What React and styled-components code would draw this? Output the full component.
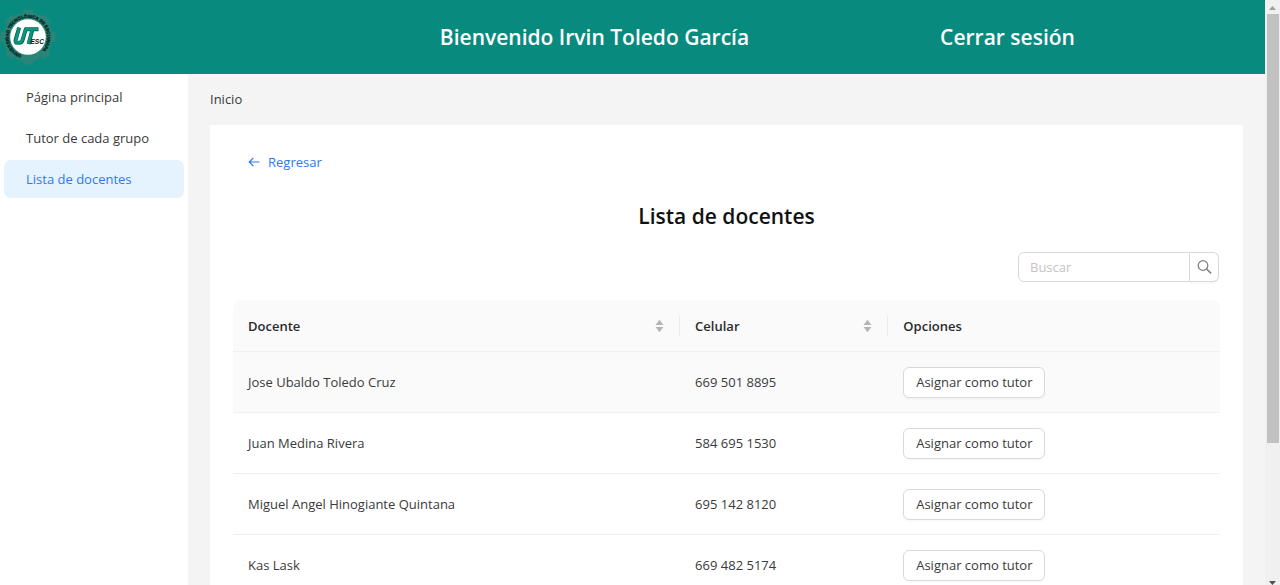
import React from "react";
import styled, { createGlobalStyle } from "styled-components";

const font = '"Segoe UI", "Open Sans", "Noto Sans", sans-serif';

const GlobalStyle = createGlobalStyle`
  *, *::before, *::after { box-sizing: border-box; }
  body {
    margin: 0;
    background: #f4f4f4;
    color: #3a3a3a;
    font: 400 13px/20px ${font};
  }
  button, input { font: inherit; color: inherit; }
`;

const Shell = styled.div`
  display: flex;
  height: 100vh;
  overflow: hidden;
`;

const Page = styled.div`
  flex: 1;
  min-width: 0;
  display: flex;
  flex-direction: column;
  overflow-y: auto;
  scrollbar-width: none;
`;

const ScrollTrack = styled.div`
  flex: none;
  width: 15px;
  display: flex;
  flex-direction: column;
  align-items: center;
  background: #f0f0f0;
  overflow: hidden;
`;

const ScrollArrow = styled.svg`
  flex: none;
  width: 15px;
  height: 14px;
  display: block;
  fill: ${(p) => (p.$dim ? "#a0a0a0" : "#505050")};
`;

const ScrollThumb = styled.div`
  width: 12px;
  flex: 429;
  background: #c1c1c1;
`;

const ScrollRest = styled.div`
  flex: 128;
`;

const Header = styled.header`
  flex: none;
  height: 74px;
  display: grid;
  grid-template-columns: 388fr 413fr 413fr 51fr;
  align-items: center;
  background: #088b7e;
  color: #fff;
  font-size: 21px;
  font-weight: 600;
  line-height: 30px;
  text-align: center;
  white-space: nowrap;
`;

const Logo = styled.svg`
  width: 56px;
  height: 56px;
  display: block;
`;

const Welcome = styled.div``;

const LogoutLink = styled.a`
  color: inherit;
  text-decoration: none;
`;

const Body = styled.div`
  flex: 1 0 auto;
  display: flex;
`;

const Sidebar = styled.nav`
  flex: none;
  width: 188px;
  padding: 4px;
  display: flex;
  flex-direction: column;
  gap: 3px;
  background: #fff;
`;

const NavItem = styled.a`
  height: 38px;
  padding: 0 22px;
  display: flex;
  align-items: center;
  border-radius: 7px;
  text-decoration: none;
  white-space: nowrap;
  color: ${(p) => (p.$active ? "#2f78f0" : "#3a3a3a")};
  background: ${(p) => (p.$active ? "#e5f3ff" : "transparent")};
`;

const Main = styled.main`
  flex: 1;
  min-width: 0;
  padding: 0 22px 22px;
`;

const Breadcrumb = styled.div`
  padding: 15px 0 16px;
`;

const Card = styled.section`
  padding: 22px 23px;
  background: #fff;
`;

const BackButton = styled.button`
  display: flex;
  align-items: center;
  gap: 8px;
  height: 30px;
  padding: 0 15px;
  border: 0;
  background: none;
  color: #2f78f0;
`;

const BackIcon = styled.svg`
  width: 12px;
  height: 12px;
  display: block;
`;

const Title = styled.h1`
  margin: 24px 0 21px;
  font-size: 21px;
  font-weight: 600;
  line-height: 30px;
  text-align: center;
  color: #111;
`;

const SearchForm = styled.form`
  display: flex;
  width: 201px;
  height: 30px;
  margin: 0 1px 18px auto;
`;

const SearchInput = styled.input`
  flex: 1;
  min-width: 0;
  padding: 0 11px;
  border: 1px solid #d9d9d9;
  border-radius: 6px 0 0 6px;
  outline: 0;
  background: #fff;
  &::placeholder { color: #c4c4c4; opacity: 1; }
`;

const SearchButton = styled.button`
  width: 29px;
  padding: 0;
  display: grid;
  place-items: center;
  border: 1px solid #d9d9d9;
  border-left: 0;
  border-radius: 0 6px 6px 0;
  background: #fff;
  box-shadow: 0 2px 0 rgba(0, 0, 0, 0.02);
  color: #808080;
`;

const SearchIcon = styled.svg`
  width: 15px;
  height: 15px;
  display: block;
`;

const Table = styled.table`
  width: 100%;
  table-layout: fixed;
  border-collapse: separate;
  border-spacing: 0;
  text-align: left;
`;

const HeadCell = styled.th`
  width: ${(p) => p.$width};
  height: 52px;
  padding: 0;
  background: #fafafa;
  border-bottom: 1px solid #f0f0f0;
  font-weight: 600;
  color: #2b2b2b;
  &:first-child { border-top-left-radius: 7px; }
  &:last-child { border-top-right-radius: 7px; }
`;

const HeadContent = styled.div`
  height: 20px;
  padding: 0 15px;
  display: flex;
  align-items: center;
  justify-content: space-between;
  border-right: ${(p) => (p.$divided ? "1px solid #ececec" : "0")};
`;

const SortIcon = styled.svg`
  width: 9px;
  height: 14px;
  display: block;
  fill: #b5b5b5;
`;

const Row = styled.tr`
  background: ${(p) => (p.$highlighted ? "#fafafa" : "#fff")};
`;

const Cell = styled.td`
  height: 61px;
  padding: 0 15px;
  border-bottom: 1px solid #f0f0f0;
`;

const AssignButton = styled.button`
  display: block;
  width: 142px;
  height: 31px;
  padding: 0;
  border: 1px solid #d9d9d9;
  border-radius: 6px;
  background: #fff;
  box-shadow: 0 2px 0 rgba(0, 0, 0, 0.02);
  white-space: nowrap;
`;

const menu = ["Página principal", "Tutor de cada grupo", "Lista de docentes"];

const columns = [
  { label: "Docente", width: "45.3%", sortable: true },
  { label: "Celular", width: "21.1%", sortable: true },
  { label: "Opciones", width: "auto", sortable: false },
];

const teachers = [
  { name: "Jose Ubaldo Toledo Cruz", phone: "669 501 8895" },
  { name: "Juan Medina Rivera", phone: "584 695 1530" },
  { name: "Miguel Angel Hinogiante Quintana", phone: "695 142 8120" },
  { name: "Kas Lask", phone: "669 482 5174" },
];

function UtescLogo() {
  return (
    <Logo viewBox="0 0 56 56" role="img" aria-label="UTESC">
      <g fill="#2a8578">
        <circle cx="28" cy="28" r="24.5" />
        {[0, 45, 90, 135].map((a) => (
          <rect key={a} x="23" y="0.5" width="10" height="55" rx="2" transform={`rotate(${a} 28 28)`} />
        ))}
      </g>
      <path id="logo-ring" d="M21.5 46.2A19.3 19.3 0 1 1 34.5 46.2" fill="none" />
      <circle cx="28" cy="28" r="17.8" fill="#fff" />
      <text
        fontSize="4.4"
        fontWeight="700"
        fontFamily="Liberation Sans, sans-serif"
        fill="#06231e"
        stroke="#06231e"
        strokeWidth="0.3"
      >
        <textPath href="#logo-ring">UNIVERSIDAD TECNOLÓGICA DE ESCUINAPA</textPath>
      </text>
      <g fill="none" strokeLinejoin="round">
        <path
          d="M19.2 18.5l-3.6 12.4q-.8 2.9 2 2.9h1.8q2.4 0 3.2-2.9L26 19.5M24.5 20.2H38.5M32.5 20.2L28.6 35"
          stroke="#07685a"
          strokeWidth="4"
        />
        <path
          d="M19.2 19l-3.5 12q-.7 2.5 1.8 2.5h1.8q2.2 0 3-2.7L25.8 20H38M32.3 20L28.5 34.5"
          stroke="#0c9580"
          strokeWidth="2.6"
        />
      </g>
      <text
        x="30.5"
        y="34.5"
        fontSize="6.5"
        fontWeight="700"
        fontStyle="italic"
        fontFamily="Liberation Sans, sans-serif"
        fill="#141414"
      >
        ESC
      </text>
    </Logo>
  );
}

export default function App() {
  return (
    <>
      <GlobalStyle />
      <Shell>
        <Page>
          <Header>
            <UtescLogo />
            <Welcome>Bienvenido Irvin Toledo García</Welcome>
            <LogoutLink href="#salir">Cerrar sesión</LogoutLink>
          </Header>
          <Body>
            <Sidebar>
              {menu.map((label, i) => (
                <NavItem key={label} href="#menu" $active={i === 2}>
                  {label}
                </NavItem>
              ))}
            </Sidebar>
            <Main>
              <Breadcrumb>Inicio</Breadcrumb>
              <Card>
                <BackButton type="button">
                  <BackIcon viewBox="0 0 12 12" fill="none" stroke="currentColor" strokeWidth="1.2">
                    <path d="M11.5 6H1.2M5.4 1.8L1.2 6l4.2 4.2" />
                  </BackIcon>
                  Regresar
                </BackButton>
                <Title>Lista de docentes</Title>
                <SearchForm role="search" onSubmit={(e) => e.preventDefault()}>
                  <SearchInput type="text" placeholder="Buscar" aria-label="Buscar" />
                  <SearchButton type="submit" aria-label="Buscar docente">
                    <SearchIcon viewBox="0 0 15 15" fill="none" stroke="currentColor" strokeWidth="1.3">
                      <circle cx="6" cy="5.5" r="4.8" />
                      <path d="M9.5 9l4.6 4.4" strokeWidth="1.6" />
                    </SearchIcon>
                  </SearchButton>
                </SearchForm>
                <Table>
                  <thead>
                    <tr>
                      {columns.map((c) => (
                        <HeadCell key={c.label} scope="col" $width={c.width}>
                          <HeadContent $divided={c.sortable}>
                            {c.label}
                            {c.sortable && (
                              <SortIcon viewBox="0 0 9 14" aria-hidden="true">
                                <path d="M4.5 0.8L8.5 6h-8zM4.5 13.2L8.5 8h-8z" />
                              </SortIcon>
                            )}
                          </HeadContent>
                        </HeadCell>
                      ))}
                    </tr>
                  </thead>
                  <tbody>
                    {teachers.map((t, i) => (
                      <Row key={t.name} $highlighted={i === 0}>
                        <Cell>{t.name}</Cell>
                        <Cell>{t.phone}</Cell>
                        <Cell>
                          <AssignButton type="button">Asignar como tutor</AssignButton>
                        </Cell>
                      </Row>
                    ))}
                  </tbody>
                </Table>
              </Card>
            </Main>
          </Body>
        </Page>
        <ScrollTrack aria-hidden="true">
          <ScrollArrow viewBox="0 0 15 14" $dim>
            <path d="M4 10l3.5-4 3.5 4z" />
          </ScrollArrow>
          <ScrollThumb />
          <ScrollRest />
          <ScrollArrow viewBox="0 0 15 14">
            <path d="M4 10l3.5 4 3.5-4z" />
          </ScrollArrow>
        </ScrollTrack>
      </Shell>
    </>
  );
}
